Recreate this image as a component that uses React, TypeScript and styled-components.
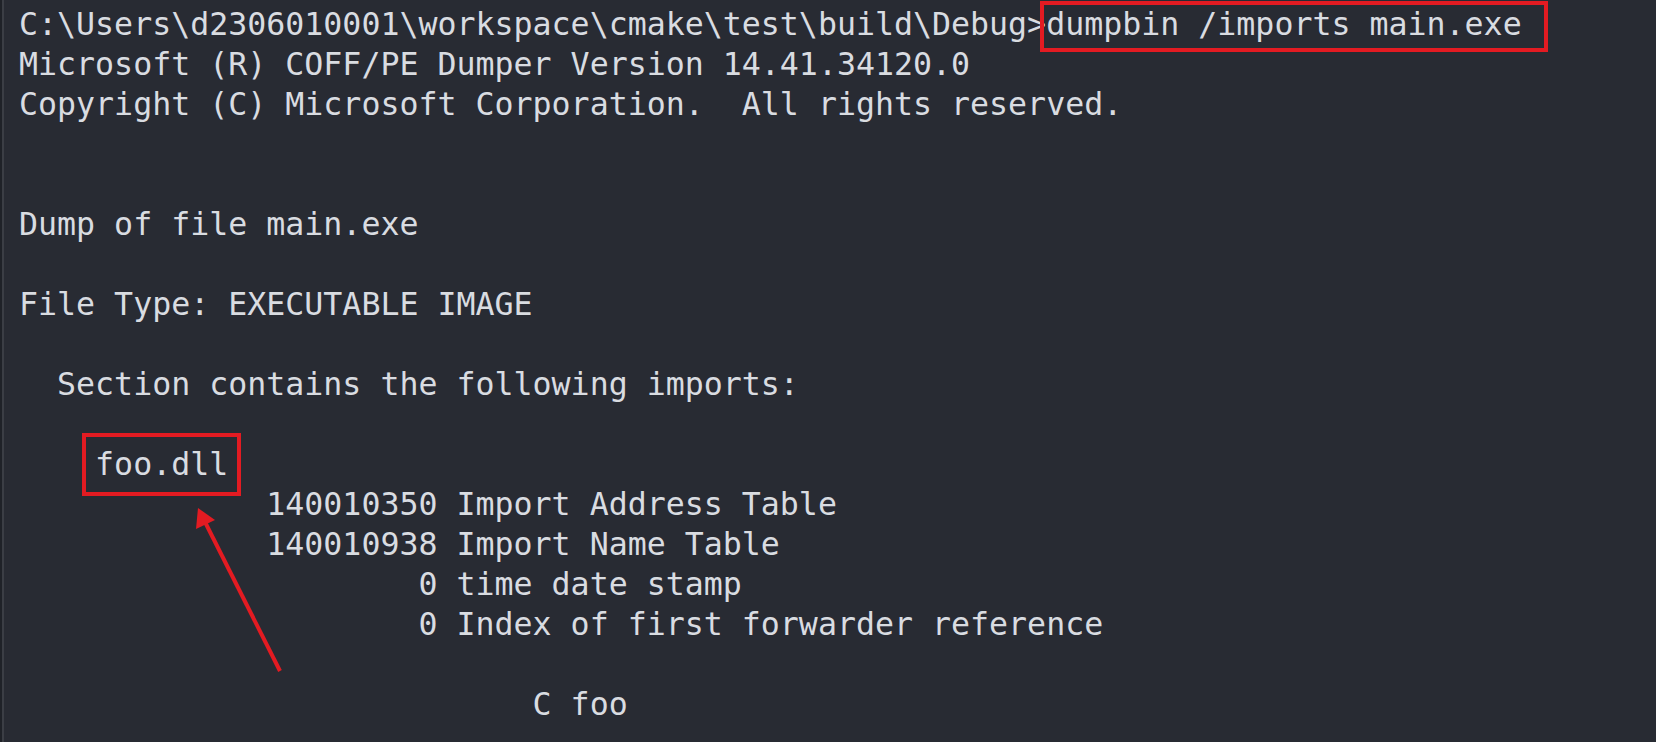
import React from "react";
import styled, { createGlobalStyle } from "styled-components";

const GlobalStyle = createGlobalStyle`
  html, body {
    margin: 0;
    padding: 0;
    background: #282b33;
  }
`;

const Terminal = styled.div`
  position: relative;
  box-sizing: border-box;
  width: 1656px;
  height: 742px;
  overflow: hidden;
  background: #282b33;
  border-left: 2px solid #1f2228;
  box-shadow: inset 2px 0 0 #3b3e45;
  padding: 4px 0 0 17px;
  font-family: "DejaVu Sans Mono", "Liberation Mono", monospace;
  font-size: 31.6px;
  line-height: 40px;
  color: #d9dce1;
`;

const Line = styled.div`
  height: 40px;
  white-space: pre;
`;

const Boxed = styled.span<{ $t: number; $r: number; $b: number; $l: number }>`
  position: relative;
  display: inline-block;
  line-height: 40px;
  &::after {
    content: "";
    position: absolute;
    top: ${(p) => p.$t}px;
    right: ${(p) => p.$r}px;
    bottom: ${(p) => p.$b}px;
    left: ${(p) => p.$l}px;
    border: 4px solid #e31b22;
    pointer-events: none;
  }
`;

const Arrow = styled.svg`
  position: absolute;
  left: 0;
  top: 0;
  pointer-events: none;
`;

const lines: string[] = [
  "Microsoft (R) COFF/PE Dumper Version 14.41.34120.0",
  "Copyright (C) Microsoft Corporation.  All rights reserved.",
  "",
  "",
  "Dump of file main.exe",
  "",
  "File Type: EXECUTABLE IMAGE",
  "",
  "  Section contains the following imports:",
  "",
];

const after: string[] = [
  "             140010350 Import Address Table",
  "             140010938 Import Name Table",
  "                     0 time date stamp",
  "                     0 Index of first forwarder reference",
  "",
  "                           C foo",
];

export default function App() {
  return (
    <>
      <GlobalStyle />
      <Terminal>
        <Line>
          C:\Users\d2306010001\workspace\cmake\test\build\Debug&gt;
          <Boxed $t={-3} $r={-26} $b={-8} $l={-6}>
            dumpbin /imports main.exe
          </Boxed>
        </Line>
        {lines.map((l, i) => (
          <Line key={`a${i}`}>{l}</Line>
        ))}
        <Line>
          {"    "}
          <Boxed $t={-11} $r={-13} $b={-12} $l={-13}>
            foo.dll
          </Boxed>
        </Line>
        {after.map((l, i) => (
          <Line key={`b${i}`}>{l}</Line>
        ))}
        <Arrow width="1656" height="742" viewBox="0 0 1656 742">
          <line x1="278" y1="671" x2="202" y2="520" stroke="#e31b22" strokeWidth="4" />
          <polygon points="196,508 194,529 213,520" fill="#e31b22" />
        </Arrow>
      </Terminal>
    </>
  );
}
